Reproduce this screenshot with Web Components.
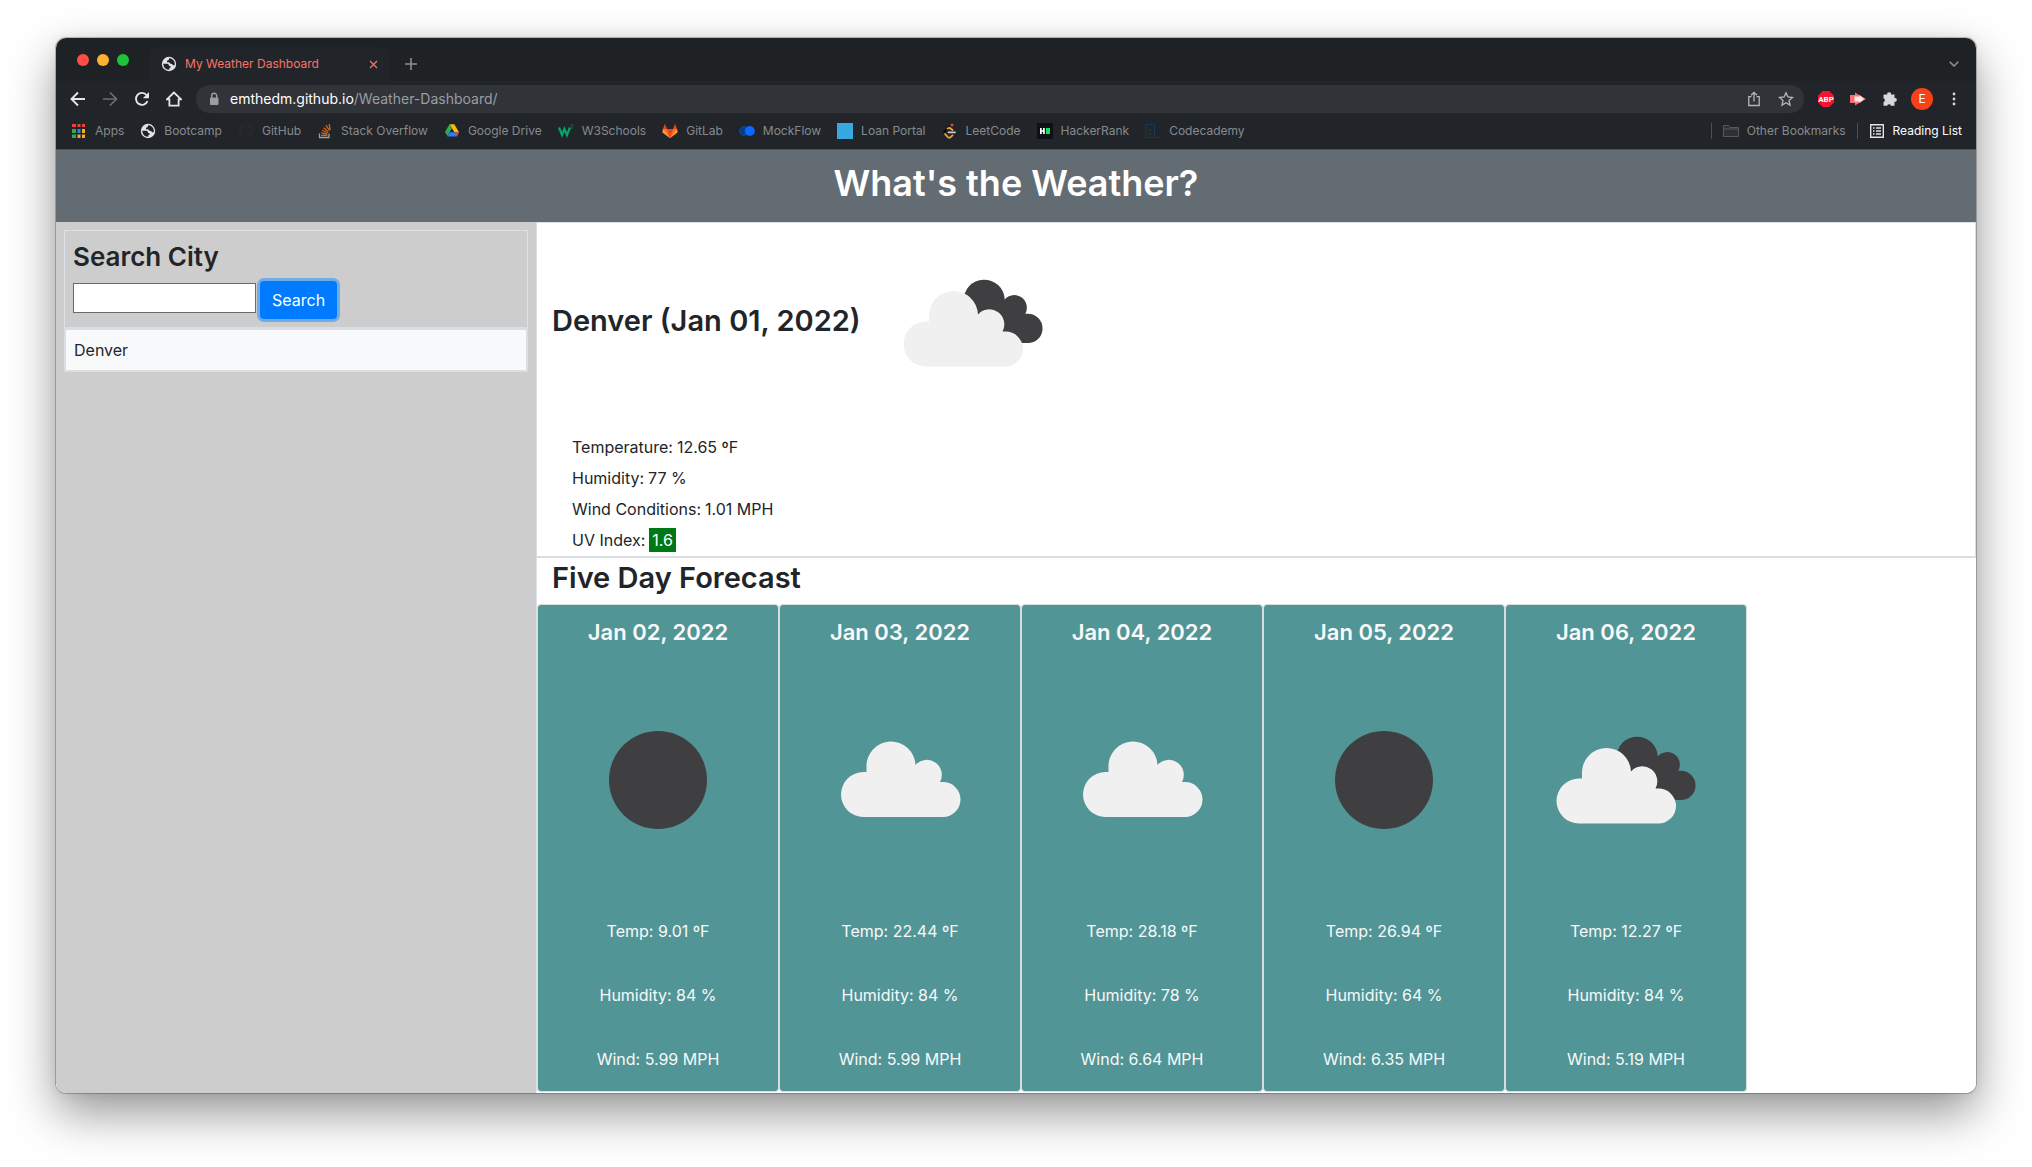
<!DOCTYPE html>
<html lang="en">
<head>
<meta charset="utf-8">
<title>My Weather Dashboard</title>
<style>
*{box-sizing:border-box}
html,body{margin:0;height:100%}
body{background:#fff;font-family:Inter,"Liberation Sans",sans-serif;font-size:16px;line-height:24px;color:#212529}
desktop-frame{min-height:100vh}
</style>
</head>
<body>
<desktop-frame>
  <browser-window>
    <tab-strip slot="chrome" label="My Weather Dashboard"></tab-strip>
    <address-bar slot="chrome" host="emthedm.github.io" path="/Weather-Dashboard/"></address-bar>
    <bookmarks-bar slot="chrome"></bookmarks-bar>
    <weather-app></weather-app>
  </browser-window>
</desktop-frame>
<script>
const I = {
  globe: '<svg width="16" height="16" viewBox="0 0 16 16"><circle cx="8" cy="8" r="7.2" fill="#dfe1e3"/><path d="M2.300 7.800h3.700c1.500 0 2 1 2 2.200h1.500v1.500c-1 .2-1.300 1-1.300 2.200-3.400.2-5.900-2.400-5.900-5.900zM8 2.400c.2 1.300-.6 2-2 2.300v1.500h2.200c.6 1.200 1.400 1.800 3 1.800.3 1 .9 1.500 2.500 1.300.6-2.900-.9-5.700-3.400-6.600C9.500 2.400 8.700 2.300 8 2.400z" fill="#202428"/></svg>',
  apps: '<svg width="16" height="16" viewBox="0 0 16 16"><g fill="#ea4335"><path d="M1 1h4v3H1zM6.500 1h3v3h-3zM11 1h3v3h-3z"/></g><path fill="#34a853" d="M1 6h4v4H1zM1 11.500h4v3.500H1z"/><path fill="#1a8cf0" d="M6.500 6h3v4h-3z"/><path fill="#fbab19" d="M11 6h3v4h-3zM11 11.500h3V15h-3zM6.500 11.500h3V15h-3z"/></svg>',
  none: '<svg width="16" height="16" viewBox="0 0 16 16"><path fill="#24292e" d="M8 .5a7.500 7.500 0 0 0-2.400 14.600v-2.500C3.500 13 3 11.700 3 11.700M8 .5a7.500 7.500 0 0 1 2.400 14.600v-3c0-1-.3-1.500-.7-1.800 2-.3 3.300-1 3.300-3.500"/></svg>',
  so: '<svg width="16" height="16" viewBox="0 0 16 16" fill="none"><path d="M2.500 10.500v4h9.500v-4" stroke="#9aa0a6" stroke-width="1.300"/><path d="M4.200 12.300h6.100M4.400 9.900l6 1.200M5.100 7.300l5.600 2.500M6.600 4.700l4.800 3.900M9 2.300l3.600 5M12.200 1l1 6" stroke="#e4660e" stroke-width="1.200"/></svg>',
  drive: '<svg width="16" height="16" viewBox="0 0 16 16"><path fill="#34a853" d="M5.500 1.200 1 9l2.300 4L8 5.200z"/><path fill="#fbbc04" d="M5.600 1.200h4.700L15 9.300h-4.600z"/><path fill="#2a7df5" d="M5.700 9.300H15L12.800 13.500H3.200z"/><path fill="#ea4335" d="M10.400 9.300H15l-2 3.600z"/></svg>',
  w3: '<svg width="16" height="16" viewBox="0 0 16 16" fill="none"><path d="M1 4.500 4 12l2.400-6L9 12l3-7.500" stroke="#0a9f6b" stroke-width="2.300"/><path d="M12.500 2h2.300l-1.300 1.600c2 .3 1.400 2.600-.8 2" stroke="#0b6f4d" stroke-width="1"/></svg>',
  gitlab: '<svg width="16" height="16" viewBox="0 0 16 16"><path fill="#e24329" d="M2.900.8.300 7.500 8 15.300l7.700-7.800L13.100.8 11 6H5z"/><path fill="#fc6d26" d="M1.500 6H5l3 9.300zM14.500 6H11l-3 9.300z"/><path fill="#fca326" d="M1.500 6 .2 9.200 8 15.300zM14.500 6l1.300 3.200L8 15.300z"/></svg>',
  mock: '<svg width="16" height="16" viewBox="0 0 16 16"><circle cx="5" cy="8" r="4.300" fill="#0b3b80" stroke="#0b4cb0"/><circle cx="10.800" cy="8" r="5" fill="#0d66ff"/></svg>',
  loan: '<svg width="16" height="16" viewBox="0 0 16 16"><path fill="#38a8e0" d="M0 0h16v16H0z"/></svg>',
  leet: '<svg width="16" height="16" viewBox="0 0 16 16" fill="none" stroke-width="1.800" stroke-linecap="round"><path d="M7.600 3 3 7.800c-.8.900-.8 2.300 0 3.200" stroke="#080808"/><path d="m3 11 2.600 2.900c.9.900 2.400.9 3.300 0l1.600-1.500M5.500 5.500l2-.800 3 2.300" stroke="#f2a33a"/><path d="M6.500 9.300H13" stroke="#c9ccd0"/><circle cx="10" cy="2" r="1.500" fill="#e0443e"/></svg>',
  hr: '<svg width="16" height="16" viewBox="0 0 16 16"><path fill="#0b1019" d="M0 0h16v16H0z"/><path fill="#fff" d="M3 5h1.700v2.200h1.400V5h1.700v6H6.100V8.700H4.700V11H3z"/><path fill="#13e05b" d="M9 5h4v6H9z"/></svg>',
  code: '<svg width="16" height="16" viewBox="0 0 16 16" fill="none" stroke="#173a52"><path d="M1 1.500h8.500v13H1zM11.500 14.500h4M7 6.300H4.300v4.300H7"/></svg>'
};
const define = (tag, html) => customElements.define(tag, class extends HTMLElement {
  constructor(){ super(); this.attachShadow({mode:'open'}); }
  connectedCallback(){
    const t = document.createElement('template');
    t.innerHTML = '<style>*{box-sizing:border-box}svg{display:block;flex:none}</style>' + (typeof html === 'function' ? html(this) : html);
    this.shadowRoot.replaceChildren(t.content.cloneNode(true));
  }
});

define('desktop-frame', `<style>:host{display:flex;padding:38px 56px 74px}</style><slot></slot>`);

define('browser-window', `<style>
:host{flex:1;display:flex;flex-direction:column;border-radius:10px;box-shadow:0 0 0 1px rgba(0,0,0,.22),0 20px 48px rgba(0,0,0,.42),0 0 12px rgba(0,0,0,.08);min-width:0}
.clip{flex:1;display:flex;flex-direction:column;border-radius:10px;overflow:hidden;background:#fff}
main{flex:1;display:flex;flex-direction:column;border-top:1px solid #4a5156}
</style><div class="clip"><slot name="chrome"></slot><main><slot></slot></main></div>`);

define('tab-strip', el => `<style>
:host{display:flex;height:43px;background:#1f2224;padding:0 14px 0 21px;font-size:12px;line-height:16px}
.lights{display:flex;gap:8px;padding-top:16px;width:72px}
.lights i{width:12px;height:12px;border-radius:50%}
.tab{display:flex;align-items:center;width:240px;margin-top:9px;padding:0 8px 0 12px;background:#212529;border-radius:8px 8px 0 0;color:#fa7366}
.tab span{flex:1;padding-left:8px}
button{all:unset;display:flex;align-items:center;justify-content:center;width:16px}
.new{margin:9px auto 0 14px}
.down{margin-top:9px}
</style>
<div class="lights"><i style="background:#ff4e49"></i><i style="background:#fdb12f"></i><i style="background:#1cc33b"></i></div>
<div class="tab">${I.globe}<span>${el.getAttribute('label')}</span><button aria-label="Close tab"><svg width="9" height="9" viewBox="0 0 9 9"><path d="m1 1 7 7M8 1 1 8" stroke="#fa7366" stroke-width="1.300"/></svg></button></div>
<button class="new" aria-label="New tab"><svg width="12" height="12" viewBox="0 0 12 12"><path d="M6 0v12M0 6h12" stroke="#8a8f95" stroke-width="1.600"/></svg></button>
<button class="down" aria-label="Search tabs"><svg width="10" height="6" viewBox="0 0 10 6"><path d="m.7.700 4.300 4.300L9.300.700" fill="none" stroke="#8a8f95" stroke-width="1.600"/></svg></button>`);

define('address-bar', el => `<style>
:host{display:flex;align-items:center;height:36px;padding:0 14px;gap:16px;background:#212529;font-size:14px;line-height:20px}
button{all:unset;display:flex;align-items:center;justify-content:center;width:16px;height:16px}
.omni{flex:1;display:flex;align-items:center;height:28px;margin:0 -2px;padding:0 10px;gap:8px;border-radius:14px;background:#303338;color:#9a9ea3}
.url{flex:1}.url b{font-weight:400;color:#fff}
.omni button+button{margin-left:8px}
.me{width:22px;height:22px;margin:0 -3px;border-radius:50%;background:#fa4016;color:#fff;font-size:12px}
</style>
<button aria-label="Back"><svg width="16" height="16" viewBox="0 0 16 16"><path d="M15 8H2M8 1.500 1.500 8 8 14.500" fill="none" stroke="#e4e6e8" stroke-width="1.900"/></svg></button>
<button aria-label="Forward"><svg width="16" height="16" viewBox="0 0 16 16"><path d="M1 8h13M8 1.500 14.500 8 8 14.500" fill="none" stroke="#6b6f74" stroke-width="1.700"/></svg></button>
<button aria-label="Reload"><svg width="16" height="16" viewBox="0 0 16 16"><path d="M13.500 10.200A6 6 0 1 1 12.600 4" fill="none" stroke="#e4e6e8" stroke-width="1.900"/><path fill="#e4e6e8" d="M15 1v6.200H8.800z"/></svg></button>
<button aria-label="Home"><svg width="16" height="16" viewBox="0 0 16 16"><path d="M8 1.500.9 8.300h2.500v6.300h9.200V8.300h2.500z" fill="none" stroke="#e4e6e8" stroke-width="1.800"/></svg></button>
<div class="omni"><svg width="16" height="16" viewBox="0 0 16 16"><rect x="4" y="6.500" width="8.500" height="7.500" rx="1" fill="#9a9ea3"/><path d="M5.700 7V4.800a2.500 2.500 0 0 1 5 0V7" fill="none" stroke="#9a9ea3" stroke-width="1.400"/></svg>
<span class="url"><b>${el.getAttribute('host')}</b>${el.getAttribute('path')}</span>
<button aria-label="Share"><svg width="16" height="16" viewBox="0 0 16 16"><path d="M5.500 5.700H2.800v8.800h10.400V5.700h-2.700M8 10.500V1.500M5 4.300l3-3 3 3" fill="none" stroke="#b4b7ba" stroke-width="1.300"/></svg></button>
<button aria-label="Bookmark"><svg width="16" height="16" viewBox="0 0 16 16"><path d="m8 1.800 1.900 4.200 4.600.5-3.500 3 1 4.600L8 11.700l-4 2.400 1-4.600-3.500-3 4.600-.5z" fill="none" stroke="#b4b7ba" stroke-width="1.300"/></svg></button></div>
<button aria-label="ABP"><svg width="16" height="16" viewBox="0 0 16 16"><path fill="#f5132f" d="M4.700 0h6.600L16 4.700v6.600L11.300 16H4.700L0 11.300V4.700z"/><text x="8" y="11" font-size="8" font-weight="700" font-family="Roboto" text-anchor="middle" fill="#fff">ABP</text></svg></button>
<button aria-label="Extension"><svg width="16" height="16" viewBox="0 0 16 16"><path fill="#fa6f70" d="M0 4h5V1.500L16 8 5 14.500V12H0z"/><path fill="#fff" d="M4.500 5.500h5V4l4.500 4-4.500 4v-1.500h-5z" opacity=".85"/></svg></button>
<button aria-label="Extensions"><svg width="16" height="16" viewBox="0 0 16 16"><path fill="#d5d8db" d="M2 3.500h3.300a1.900 1.900 0 1 1 3.700 0h3.500V7a1.900 1.900 0 1 1 0 3.700v4H9a2 2 0 0 0-3.800 0H1.500v-3.600a2 2 0 0 0 0-3.800V4z"/></svg></button>
<button class="me" aria-label="Profile">E</button>
<button aria-label="Menu"><svg width="16" height="16" viewBox="0 0 16 16" fill="#d5d8db"><circle cx="8" cy="3" r="1.400"/><circle cx="8" cy="8" r="1.400"/><circle cx="8" cy="13" r="1.400"/></svg></button>`);

define('bookmark-link', el => `<style>
:host{display:block}a{display:flex;align-items:center;gap:8px;color:inherit;text-decoration:none;white-space:nowrap}
</style><a href="#">${I[el.getAttribute('icon')] || '<slot name="icon"></slot>'}<slot></slot></a>`);

define('bookmarks-bar', `<style>
:host{display:flex;align-items:center;height:32px;padding:0 14px 4px 15px;gap:16px;background:#212529;color:#868a8f;font-size:12px;line-height:16px}
.sep{width:1px;height:16px;background:#4b4f54;margin:0 -5px}
.first{margin-left:auto}
.read{color:#fff}
</style>
<bookmark-link icon="apps">Apps</bookmark-link>
<bookmark-link icon="globe">Bootcamp</bookmark-link>
<bookmark-link icon="none">GitHub</bookmark-link>
<bookmark-link icon="so">Stack Overflow</bookmark-link>
<bookmark-link icon="drive">Google Drive</bookmark-link>
<bookmark-link icon="w3">W3Schools</bookmark-link>
<bookmark-link icon="gitlab">GitLab</bookmark-link>
<bookmark-link icon="mock">MockFlow</bookmark-link>
<bookmark-link icon="loan">Loan Portal</bookmark-link>
<bookmark-link icon="leet">LeetCode</bookmark-link>
<bookmark-link icon="hr">HackerRank</bookmark-link>
<bookmark-link icon="code">Codecademy</bookmark-link>
<span class="sep first"></span>
<bookmark-link><svg slot="icon" width="16" height="16" viewBox="0 0 16 16"><path d="M.5 13.500v-11h5l1.500 2h8.500v9zM.5 6h15" fill="#2e3032" stroke="#55595c"/></svg>Other Bookmarks</bookmark-link>
<span class="sep"></span>
<bookmark-link class="read"><svg slot="icon" width="16" height="16" viewBox="0 0 16 16"><path d="M1.700 1.700h12.600v12.600H1.700z" fill="none" stroke="#e0e2e4" stroke-width="1.400"/><path d="M4 5h1.500M4 8h1.500M4 11h1.500M7 5h5M7 8h5M7 11h5" stroke="#e0e2e4" stroke-width="1.300"/></svg>Reading List</bookmark-link>`);

// Weather pictures share one 200-unit canvas.
const CLOUD = '<path d="M62 137a22.500 22.500 0 0 1 0-45h3v-5a24.500 24.500 0 0 1 49-2 15 15 0 0 1 24.500 17h3a17.500 17.500 0 0 1 0 35z"/>';
const SKY = {
  clear: '<circle cx="100" cy="100" r="49" fill="#3f3f41"/>',
  clouds: `<g fill="#f0f0f0" transform="translate(1.500 0)">${CLOUD}</g>`,
  broken: `<g fill="#3f3f41" transform="translate(36 5) scale(.84)">${CLOUD}</g><g fill="#f0f0f0" transform="translate(-9 6.500)">${CLOUD}</g>`
};
define('weather-icon', el => `<style>:host{display:block;width:200px;height:200px}</style><svg width="200" height="200" viewBox="0 0 200 200" role="img">${SKY[el.getAttribute('sky')]}</svg>`);

define('city-search', `<style>
:host{display:block;padding:8px}
form{margin:0;padding:8px;border:1px solid #dee2e6;border-bottom:0}
label{display:block;font-size:26px;line-height:36px;font-weight:600;margin-bottom:6px}
.row{display:flex;align-items:flex-start;gap:4px}
input{width:183px;height:30px;margin-top:2px;border:1px solid #6b6b6b;border-radius:0;background:#fff;padding:2px;font:inherit}
button{height:38px;padding:0 12px;border:0;border-radius:4px;background:#007bff;color:#fff;font:inherit;box-shadow:0 0 0 3px rgba(38,143,255,.55)}
ul{margin:0;padding:0;list-style:none}
li{border:2px solid #d9dee2;border-top-width:3px;background:#f8f9fa;padding:8px}
</style>
<form><label for="city">Search City</label><div class="row"><input id="city" type="text"><button type="button">Search</button></div></form>
<ul><li>Denver</li></ul>`);

define('current-weather', `<style>
:host{display:block;height:336px;border:1px solid #d9dee2;border-width:1px 1px 2px}
h2{margin:0 0 12px;padding:0 15px;font-size:29px;line-height:38px;font-weight:600}
weather-icon{display:inline-block;vertical-align:middle;margin-left:5px}
dl{margin:0;padding-left:35px;display:grid;gap:7px}
.r{display:flex;gap:4px}
dt,dd{margin:0}.uv{background:#007816;color:#fff;padding:0 3px}
</style>
<h2>Denver (Jan 01, 2022) <weather-icon sky="broken"></weather-icon></h2>
<dl><div class="r"><dt>Temperature:</dt><dd>12.65 ºF</dd></div><div class="r"><dt>Humidity:</dt><dd>77 %</dd></div><div class="r"><dt>Wind Conditions:</dt><dd>1.01 MPH</dd></div><div class="r"><dt>UV Index:</dt><dd class="uv">1.6</dd></div></dl>`);

define('forecast-card', el => `<style>
:host{display:flex;flex-direction:column;align-items:center;width:242px;border:1px solid #d9dcdd;border-radius:4px;background:#529596;color:#f8f9fa;padding-top:12px}
h4{margin:0 0 33px;font-size:22px;line-height:30px;font-weight:600}
weather-icon{margin-bottom:39px}
p{margin:0 0 40px}
p:last-child{margin-bottom:20px}
</style><h4>${el.getAttribute('day')}</h4><weather-icon sky="${el.getAttribute('sky')}"></weather-icon>
<p>Temp: ${el.getAttribute('temp')} ºF</p><p>Humidity: ${el.getAttribute('humidity')} %</p><p>Wind: ${el.getAttribute('wind')} MPH</p>`);

define('five-day-forecast', `<style>
:host{display:block;border-left:1px solid #dee2e6}
h2{margin:0 0 6px 15px;font-size:29px;line-height:40px;font-weight:600}
.cards{display:flex}
</style><h2>Five Day Forecast</h2><div class="cards">
<forecast-card day="Jan 02, 2022" sky="clear" temp="9.01" humidity="84" wind="5.99"></forecast-card>
<forecast-card day="Jan 03, 2022" sky="clouds" temp="22.44" humidity="84" wind="5.99"></forecast-card>
<forecast-card day="Jan 04, 2022" sky="clouds" temp="28.18" humidity="78" wind="6.64"></forecast-card>
<forecast-card day="Jan 05, 2022" sky="clear" temp="26.94" humidity="64" wind="6.35"></forecast-card>
<forecast-card day="Jan 06, 2022" sky="broken" temp="12.27" humidity="84" wind="5.19"></forecast-card>
</div>`);

define('weather-app', `<style>
:host{flex:1;display:flex;flex-direction:column}
header{background:#626c72;padding:8px 0 14px;text-align:center;color:#fff}
h1{margin:0;font-size:36px;line-height:50px;font-weight:600}
.cols{flex:1;display:grid;grid-template-columns:1fr 3fr}
city-search{background:#cdcdcd}
</style><header><h1>What's the Weather?</h1></header>
<div class="cols"><city-search></city-search><section><current-weather></current-weather><five-day-forecast></five-day-forecast></section></div>`);
</script>
</body>
</html>
